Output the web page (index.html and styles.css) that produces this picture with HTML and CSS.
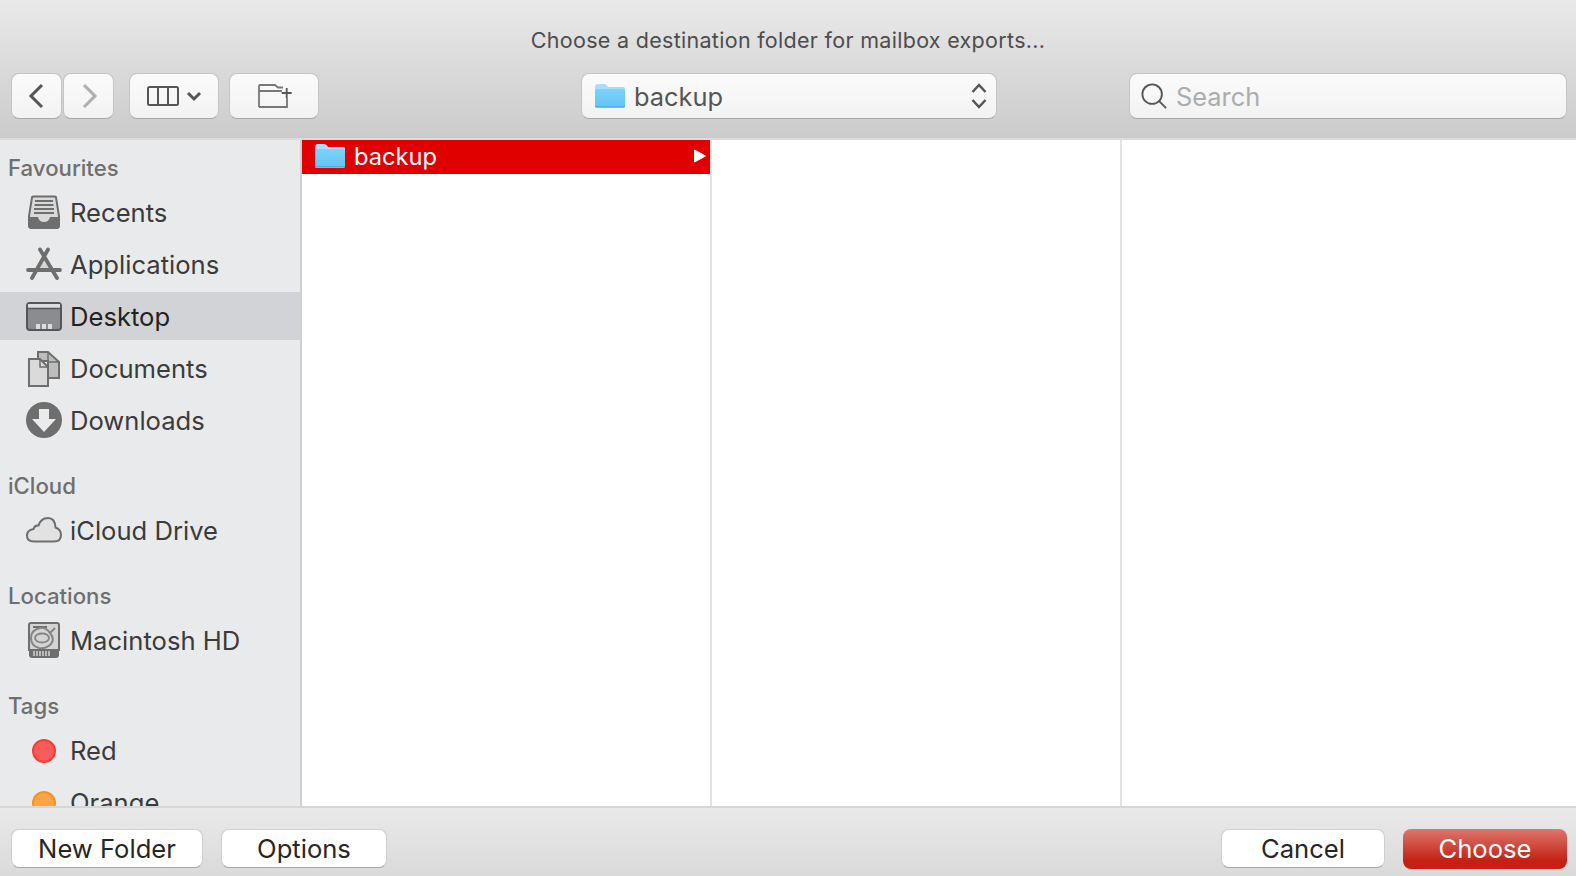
FILE: index.html
```html
<!DOCTYPE html>
<html lang="en">
<head>
  <meta charset="UTF-8" />
  <title>Choose a destination folder</title>
  <link rel="stylesheet" href="styles.css">
</head>
<body>
  <svg class="defs" width="0" height="0">
    <defs>
      <linearGradient id="folderFill" x1="0" y1="0" x2="0" y2="1">
        <stop offset="0" stop-color="#7bd3fb"/>
        <stop offset="1" stop-color="#62c3f5"/>
      </linearGradient>
      <symbol id="folder" viewBox="0 0 30 24">
        <path d="M0 3Q0 0 3 0H9Q11 0 12 1.500L13 3H28.500Q30 3 30 4.500V22Q30 24 28 24H2Q0 24 0 22Z" fill="#a4e0fb"/>
        <path d="M0 6.500Q0 5 1.500 5H28.500Q30 5 30 6.500V22Q30 24 28 24H2Q0 24 0 22Z" fill="url(#folderFill)"/>
        <path d="M0 22.500H30" stroke="#4fb0e6" stroke-width="1"/>
      </symbol>
    </defs>
  </svg>

  <header class="toolbar">
    <div class="title">Choose a destination folder for mailbox exports...</div>
    <div class="toolbar-row">
      <div class="nav-group">
        <button class="tool-btn nav-btn">
          <svg width="18" height="26" viewBox="0 0 18 26"><path d="M14 2L3 13L14 24" class="stroke-dark" stroke-width="3"/></svg>
        </button>
        <button class="tool-btn nav-btn">
          <svg width="18" height="26" viewBox="0 0 18 26"><path d="M4 2L15 13L4 24" class="stroke-light" stroke-width="3"/></svg>
        </button>
      </div>
      <button class="tool-btn view-btn">
        <svg width="56" height="22" viewBox="0 0 56 22">
          <rect x="2" y="2" width="30" height="18" rx="1.500" class="stroke-dark" stroke-width="2"/>
          <path d="M12 2V20M22 2V20" class="stroke-dark" stroke-width="2"/>
          <path d="M42 8L48 14L54 8" class="stroke-dark" stroke-width="3"/>
        </svg>
      </button>
      <button class="tool-btn new-btn">
        <svg class="new-icon" width="34" height="24" viewBox="0 0 34 24">
          <path d="M1 23V2Q1 1 2 1H17L20 3.500H25M1 7H24M1 23H29V14" class="stroke-mid" stroke-width="1.800"/>
          <path d="M28.700 4V14M23.700 9H33.700" class="stroke-dark" stroke-width="1.800"/>
        </svg>
      </button>
      <div class="path-popup">
        <svg class="path-folder" width="30" height="24"><use href="#folder"/></svg>
        <span class="path-name">backup</span>
        <svg class="updown" width="16" height="28" viewBox="0 0 16 28">
          <path d="M1.500 10L8 3L14.500 10M1.500 18L8 25L14.500 18" class="stroke-dark" stroke-width="2.500"/>
        </svg>
      </div>
      <div class="search">
        <svg width="26" height="26" viewBox="0 0 28 28">
          <circle cx="12" cy="12" r="10.500" class="stroke-dark" stroke-width="2"/>
          <path d="M19 19L27 27" class="stroke-dark" stroke-width="2"/>
        </svg>
        <span class="search-text">Search</span>
      </div>
    </div>
  </header>

  <main class="browser">
    <nav class="sidebar">
      <div class="side-head first">Favourites</div>
      <div class="side-item">
        <svg class="side-icon" viewBox="0 0 36 36">
          <path d="M6 2.500Q6 1.500 7 1.500H29Q30 1.500 30 2.500L33 21V30Q33 33 30 33H6Q3 33 3 30V21Z" fill="#d9d9d9" stroke="#6e6e6e" stroke-width="2"/>
          <path d="M9 6H27M8.500 10H27.500M8 14H28M8 18H28" stroke="#6e6e6e" stroke-width="1.800"/>
          <path d="M2 22H12Q13 27 18 27T24 22H34V30Q34 34 30 34H6Q2 34 2 30Z" fill="#6e6e6e"/>
        </svg>
        <span>Recents</span>
      </div>
      <div class="side-item">
        <svg class="side-icon" viewBox="0 0 36 36">
          <path d="M18 10L11 23H25Z" fill="#d4d4d4"/>
          <path d="M14 2.500L31 31M22 2.500L6 31" stroke="#6e6e6e" stroke-width="3.800" stroke-linecap="round" fill="none"/>
          <path d="M2 23H34" stroke="#6e6e6e" stroke-width="3.800" stroke-linecap="round"/>
        </svg>
        <span>Applications</span>
      </div>
      <div class="side-item selected">
        <svg class="side-icon" viewBox="0 0 36 36">
          <rect x="1" y="4" width="34" height="27" rx="3" fill="#8b8c8f" stroke="#55565a" stroke-width="2"/>
          <rect x="2" y="5" width="32" height="4" fill="#dcdde0"/>
          <path d="M1 9.500H35" stroke="#55565a" stroke-width="1.500"/>
          <path d="M10 25H14V30H10ZM16 25H20V30H16ZM22 25H26V30H22Z" fill="#dcdde0"/>
        </svg>
        <span>Desktop</span>
      </div>
      <div class="side-item">
        <svg class="side-icon" viewBox="0 0 36 36">
          <path d="M12 1H22L33 11V27H22V10H12Z" fill="#bdbdbd" stroke="#6e6e6e" stroke-width="2"/>
          <path d="M22 1V11H33" fill="none" stroke="#6e6e6e" stroke-width="1.500"/>
          <path d="M3 8H14L22 16V35H3Z" fill="#dadada" stroke="#6e6e6e" stroke-width="2"/>
          <path d="M14 8V16H22" fill="none" stroke="#6e6e6e" stroke-width="1.500"/>
        </svg>
        <span>Documents</span>
      </div>
      <div class="side-item">
        <svg class="side-icon" viewBox="0 0 36 36">
          <circle cx="18" cy="17" r="18" fill="#6e6e6e"/>
          <path d="M13 6H23V16H30L18 29L6 16H13Z" fill="#eaebec"/>
        </svg>
        <span>Downloads</span>
      </div>

      <div class="side-head">iCloud</div>
      <div class="side-item">
        <svg class="side-icon" viewBox="0 -1 36 36">
          <path d="M8 27.500Q1 27.500 1 21.500Q1 16 7.500 15Q8.500 11 12.500 11.500Q15 4 22 4Q29 4 29.500 13.500Q35 15.500 35 21Q35 27.500 28 27.500Z" fill="#e2e2e2" stroke="#6e6e6e" stroke-width="2"/>
        </svg>
        <span>iCloud Drive</span>
      </div>

      <div class="side-head">Locations</div>
      <div class="side-item">
        <svg class="side-icon" viewBox="0 0 36 36">
          <path d="M5 0H31Q33 0 33 2V27H3V2Q3 0 5 0Z" fill="#d4d4d4" stroke="#6e6e6e" stroke-width="2"/>
          <path d="M7 4H21" stroke="#6e6e6e" stroke-width="2"/>
          <path d="M29 5L24 10Q29 16 25 21Q20 26 13 25Q5 23 5 15Q5 7 14 5Q20 4 24 10" fill="none" stroke="#858585" stroke-width="2"/>
          <ellipse cx="16" cy="15" rx="7" ry="4.500" fill="none" stroke="#858585" stroke-width="1.800"/>
          <path d="M3 26H33V32Q33 35 30 35H6Q3 35 3 32Z" fill="#6e6e6e"/>
          <path d="M8 28V33M11 28V33M14 28V33M17 28V33M20 28V33M23 28V33" stroke="#d4d4d4" stroke-width="1.500"/>
        </svg>
        <span>Macintosh HD</span>
      </div>

      <div class="side-head">Tags</div>
      <div class="side-item">
        <div class="side-icon tag-slot"><i class="tag tag-red"></i></div>
        <span>Red</span>
      </div>
      <div class="side-item">
        <div class="side-icon tag-slot"><i class="tag tag-orange"></i></div>
        <span>Orange</span>
      </div>
    </nav>

    <section class="column col-first">
      <div class="file-row">
        <svg class="file-folder" width="30" height="24"><use href="#folder"/></svg>
        <span class="file-name">backup</span>
        <svg class="file-arrow" width="12" height="14" viewBox="0 0 12 14"><path d="M0.500 1L11.500 7L0.500 13Z" fill="#fff" stroke="#fff" stroke-linejoin="round"/></svg>
      </div>
    </section>
    <section class="column col-second"></section>
    <section class="column col-third"></section>
  </main>

  <footer class="bottom-bar">
    <button class="foot-btn new-folder">New Folder</button>
    <button class="foot-btn options">Options</button>
    <button class="foot-btn cancel">Cancel</button>
    <button class="foot-btn choose">Choose</button>
  </footer>
</body>
</html>
```

FILE: styles.css
```css
* { box-sizing: border-box; }
html, body {
  height: 100%;
}
body {
  margin: 0;
  font-family: Inter, 'Noto Sans', sans-serif;
  display: flex;
  flex-direction: column;
  height: 876px;
  overflow: hidden;
  background: #fff;
}
.defs {
  position: absolute;
}
.stroke-dark, .stroke-mid, .stroke-light {
  fill: none;
}
.stroke-dark { stroke: #555; }
.stroke-mid { stroke: #777; }
.stroke-light { stroke: #aeaeae; }

/* toolbar */
.toolbar {
  height: 140px;
  flex: none;
  background: linear-gradient(to bottom, #e9e9e9, #cbcbcb);
  border-bottom: 2px solid #dcdcdc;
}
.title {
  height: 73px;
  padding-top: 26px;
  text-align: center;
  font-size: 21.5px;
  line-height: 28px;
  letter-spacing: 0.3px;
  color: #4d4d4d;
}
.toolbar-row {
  display: flex;
  align-items: flex-start;
  padding-left: 11px;
}
.nav-group {
  display: flex;
  gap: 1px;
}
.tool-btn, .path-popup, .search {
  height: 46px;
  padding: 0;
  background: linear-gradient(to bottom, #fbfbfb, #f2f2f2);
  border: 1px solid #c4c4c4;
  border-bottom-color: #a9a9a9;
  border-radius: 8px;
  display: flex;
  align-items: center;
  justify-content: center;
}
.nav-btn { width: 51px; }
.view-btn { width: 90px; margin-left: 15px; }
.new-btn { width: 90px; margin-left: 10px; }
.new-icon { margin-left: 2px; }
.path-popup {
  width: 416px;
  margin-left: 262px;
  justify-content: flex-start;
  padding: 0 9px 0 13px;
}
.path-name {
  margin-left: 9px;
  font-size: 25.4px;
  color: #555;
}
.updown {
  margin-left: auto;
}
.search {
  width: 438px;
  margin-left: 132px;
  justify-content: flex-start;
  padding-left: 11px;
}
.search-text {
  margin-left: 9px;
  font-size: 25.4px;
  color: #acacac;
}

/* sidebar and columns */
.browser {
  flex: 1;
  display: flex;
  min-height: 0;
}
.sidebar {
  width: 302px;
  flex: none;
  overflow: hidden;
  background: #e9eaeb;
  border-right: 2px solid #d0d0d0;
}
.side-head {
  height: 34px;
  margin: 22px 0 2px;
  padding-left: 8px;
  font-size: 22.2px;
  font-weight: 500;
  line-height: 34px;
  color: #6f6f70;
}
.side-head.first {
  margin-top: 11px;
}
.side-item {
  height: 52px;
  padding-left: 26px;
  display: flex;
  align-items: center;
  gap: 8px;
  font-size: 25.6px;
  color: #3b3b3b;
}
.side-item span {
  margin-top: -2px;
}
.side-item.selected {
  height: 48px;
  margin: 1px 0 3px;
  padding-top: 2px;
  background: #d2d3d6;
  color: #222;
}
.side-icon {
  width: 36px;
  height: 36px;
  flex: none;
  overflow: visible;
}
.tag-slot {
  display: flex;
  align-items: center;
  justify-content: center;
}
.tag {
  display: block;
  width: 24px;
  height: 24px;
  border-radius: 50%;
}
.tag-red {
  background: #fb5b5b;
  border: 2px solid #f63d36;
}
.tag-orange {
  background: #fda544;
  border: 2px solid #f7931e;
}
.column {
  border-right: 2px solid #e3e3e3;
  background: #fff;
}
.col-first { width: 410px; }
.col-second { width: 410px; }
.col-third { flex: 1; border-right: none; }
.file-row {
  height: 34px;
  width: 408px;
  display: flex;
  align-items: center;
  padding: 0 4px 2px 13px;
  background: #e00000;
}
.file-name {
  margin-left: 9px;
  font-size: 23.7px;
  color: #fff;
}
.file-arrow {
  margin-left: auto;
}

/* bottom bar */
.bottom-bar {
  height: 70px;
  flex: none;
  display: flex;
  align-items: flex-start;
  padding: 21px 9px 0 11px;
  background: linear-gradient(to bottom, #e9e9e9, #dadada);
  border-top: 2px solid #d6d6d6;
}
.foot-btn {
  height: 39px;
  padding: 0;
  font-family: inherit;
  font-size: 25.6px;
  color: #262626;
  background: #fff;
  border: 1px solid #cfcfcf;
  border-bottom-color: #a8a8a8;
  border-radius: 8px;
}
.new-folder { width: 192px; }
.options { width: 166px; margin-left: 18px; }
.cancel { width: 164px; margin-left: auto; }
.choose {
  width: 164px;
  height: 40px;
  margin-left: 18px;
  padding-bottom: 2px;
  color: #fff;
  border: none;
  background: linear-gradient(to bottom, #dd776d, #c42013 80%);
}
```
